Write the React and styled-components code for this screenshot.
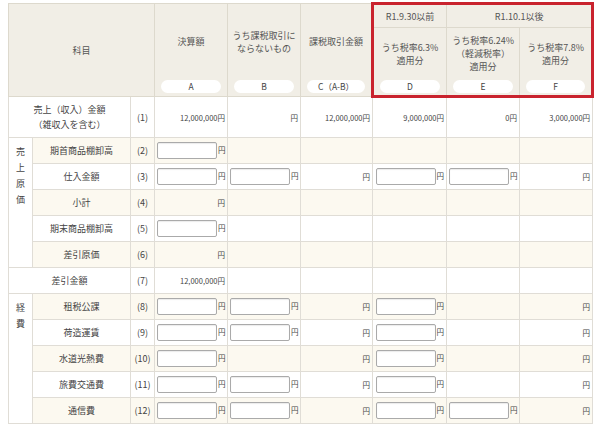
import React from "react";
import styled, { createGlobalStyle } from "styled-components";

const Global = createGlobalStyle`
  body { margin: 0; background: #fff; font-family: "Noto Sans CJK JP", "Noto Sans", sans-serif; color: #444; }
`;

const Wrap = styled.div`
  padding: 2px 8px 0 8px;
  width: 584px;
  height: 422px;
  overflow: hidden;
`;

const Table = styled.table`
  border-collapse: collapse;
  table-layout: fixed;
  width: 584px;
  font-size: 9px;
`;

const Th = styled.th`
  background: #f1eee6;
  font-weight: normal;
  color: #555;
  font-size: 9px;
  line-height: 13px;
  border-left: 1px solid #ddd9cd;
  border-right: 1px solid #ddd9cd;
  border-top: ${p => (p.$redTop ? "3px solid #c9232e" : "1px solid #ddd9cd")};
  border-bottom: ${p => (p.$redBottom ? "3px solid #c9232e" : p.$noBottom ? "none" : "1px solid #ddd9cd")};
  ${p => p.$redLeft && "border-left: 3px solid #c9232e;"}
  ${p => p.$redRight && "border-right: 3px solid #c9232e;"}
  ${p => p.$noTop && "border-top: none;"}
  height: ${p => p.$h || "auto"};
  padding: 0 3px;
  vertical-align: middle;
`;

const Pill = styled.div`
  background: #fff;
  border-radius: 8px;
  height: 13px;
  line-height: 13px;
  font-size: 8.5px;
  margin: 0 3px 2px;
  color: #444;
`;

const Row = styled.tr`
  background: ${p => (p.$alt ? "#fcf9f0" : "#fff")};
  height: ${p => p.$h || "26px"};
`;

const Td = styled.td`
  border: 1px solid #e0ddd6;
  padding: 0 2px;
  height: ${p => p.$h || "auto"};
  text-align: ${p => p.$align || "right"};
  font-size: ${p => p.$fs || "7.5px"};
  color: #444;
  vertical-align: middle;
  white-space: nowrap;
  ${p => p.$white && "background: #fff;"}
  ${p => p.$top && "vertical-align: top; padding-top: 6px; line-height: 16px;"}
`;

const Input = styled.span`
  display: inline-block;
  width: 58px;
  height: 15px;
  border: 1px solid #aaa;
  border-radius: 2px;
  background: #fff;
  vertical-align: middle;
  margin-right: 1px;
  box-shadow: inset 0 1px 1px rgba(0,0,0,0.08);
`;

const Yen = ({ input, val }) => (
  <>
    {input && <Input />}
    {val || ""}円
  </>
);

const cols = [24, 98, 24, 73, 73, 72, 74, 73, 73];

const rows = [
  { no: "(2)", label: "期首商品棚卸高", cells: [{ i: 1 }, null, null, null, null, null] },
  { no: "(3)", label: "仕入金額", cells: [{ i: 1 }, { i: 1 }, {}, { i: 1 }, { i: 1 }, {}] },
  { no: "(4)", label: "小計", cells: [{}, null, null, null, null, null] },
  { no: "(5)", label: "期末商品棚卸高", cells: [{ i: 1 }, null, null, null, null, null] },
  { no: "(6)", label: "差引原価", cells: [{}, null, null, null, null, null] },
];

const rows2 = [
  { no: "(8)", label: "租税公課", cells: [{ i: 1 }, { i: 1 }, {}, { i: 1 }, null, {}] },
  { no: "(9)", label: "荷造運賃", cells: [{ i: 1 }, { i: 1 }, {}, { i: 1 }, null, {}] },
  { no: "(10)", label: "水道光熱費", cells: [{ i: 1 }, null, {}, { i: 1 }, null, {}] },
  { no: "(11)", label: "旅費交通費", cells: [{ i: 1 }, { i: 1 }, {}, { i: 1 }, null, {}] },
  { no: "(12)", label: "通信費", cells: [{ i: 1 }, { i: 1 }, {}, { i: 1 }, { i: 1 }, {}] },
];

const Cells = ({ cells }) =>
  cells.map((c, k) => <Td key={k}>{c && <Yen input={c.i} />}</Td>);

export default function App() {
  return (
    <Wrap>
      <Global />
      <Table>
        <colgroup>
          {cols.map((w, i) => <col key={i} style={{ width: w }} />)}
        </colgroup>
        <thead>
          <tr>
            <Th colSpan={3} rowSpan={3}>科目</Th>
            <Th rowSpan={2} $noBottom>決算額</Th>
            <Th rowSpan={2} $noBottom>うち課税取引に<br />ならないもの</Th>
            <Th rowSpan={2} $noBottom>課税取引金額</Th>
            <Th $h="22px" $redTop $redLeft>R1.9.30以前</Th>
            <Th colSpan={2} $redTop $redRight>R1.10.1以後</Th>
          </tr>
          <tr>
            <Th $h="51px" $redLeft $noBottom>うち税率6.3%<br />適用分</Th>
            <Th $noBottom>うち税率6.24%<br />（軽減税率）<br />適用分</Th>
            <Th $redRight $noBottom>うち税率7.8%<br />適用分</Th>
          </tr>
          <tr>
            <Th $h="17px" $noTop><Pill>A</Pill></Th>
            <Th $noTop><Pill>B</Pill></Th>
            <Th $noTop><Pill>C（A-B）</Pill></Th>
            <Th $noTop $redLeft $redBottom><Pill>D</Pill></Th>
            <Th $noTop $redBottom><Pill>E</Pill></Th>
            <Th $noTop $redRight $redBottom><Pill>F</Pill></Th>
          </tr>
        </thead>
        <tbody>
          <Row $h="41px">
            <Td colSpan={2} $align="center" $fs="9px" style={{ lineHeight: "15px" }}>
              売上（収入）金額<br />（雑収入を含む）
            </Td>
            <Td $align="center" $fs="9px">(1)</Td>
            <Td>12,000,000円</Td>
            <Td>円</Td>
            <Td>12,000,000円</Td>
            <Td>9,000,000円</Td>
            <Td>0円</Td>
            <Td>3,000,000円</Td>
          </Row>
          {rows.map((r, i) => (
            <Row key={r.no} $alt={i % 2 === 0}>
              {i === 0 && (
                <Td rowSpan={5} $white $top $align="center" $fs="9px">売<br />上<br />原<br />価</Td>
              )}
              <Td $align="center" $fs="9px">{r.label}</Td>
              <Td $align="center" $fs="9px">{r.no}</Td>
              <Cells cells={r.cells} />
            </Row>
          ))}
          <Row>
            <Td colSpan={2} $align="center" $fs="9px">差引金額</Td>
            <Td $align="center" $fs="9px">(7)</Td>
            <Td>12,000,000円</Td>
            <Td /><Td /><Td /><Td /><Td />
          </Row>
          {rows2.map((r, i) => (
            <Row key={r.no} $alt={i % 2 === 0}>
              {i === 0 && (
                <Td rowSpan={5} $white $top $align="center" $fs="9px">経<br />費</Td>
              )}
              <Td $align="center" $fs="9px">{r.label}</Td>
              <Td $align="center" $fs="9px">{r.no}</Td>
              <Cells cells={r.cells} />
            </Row>
          ))}
        </tbody>
      </Table>
    </Wrap>
  );
}
